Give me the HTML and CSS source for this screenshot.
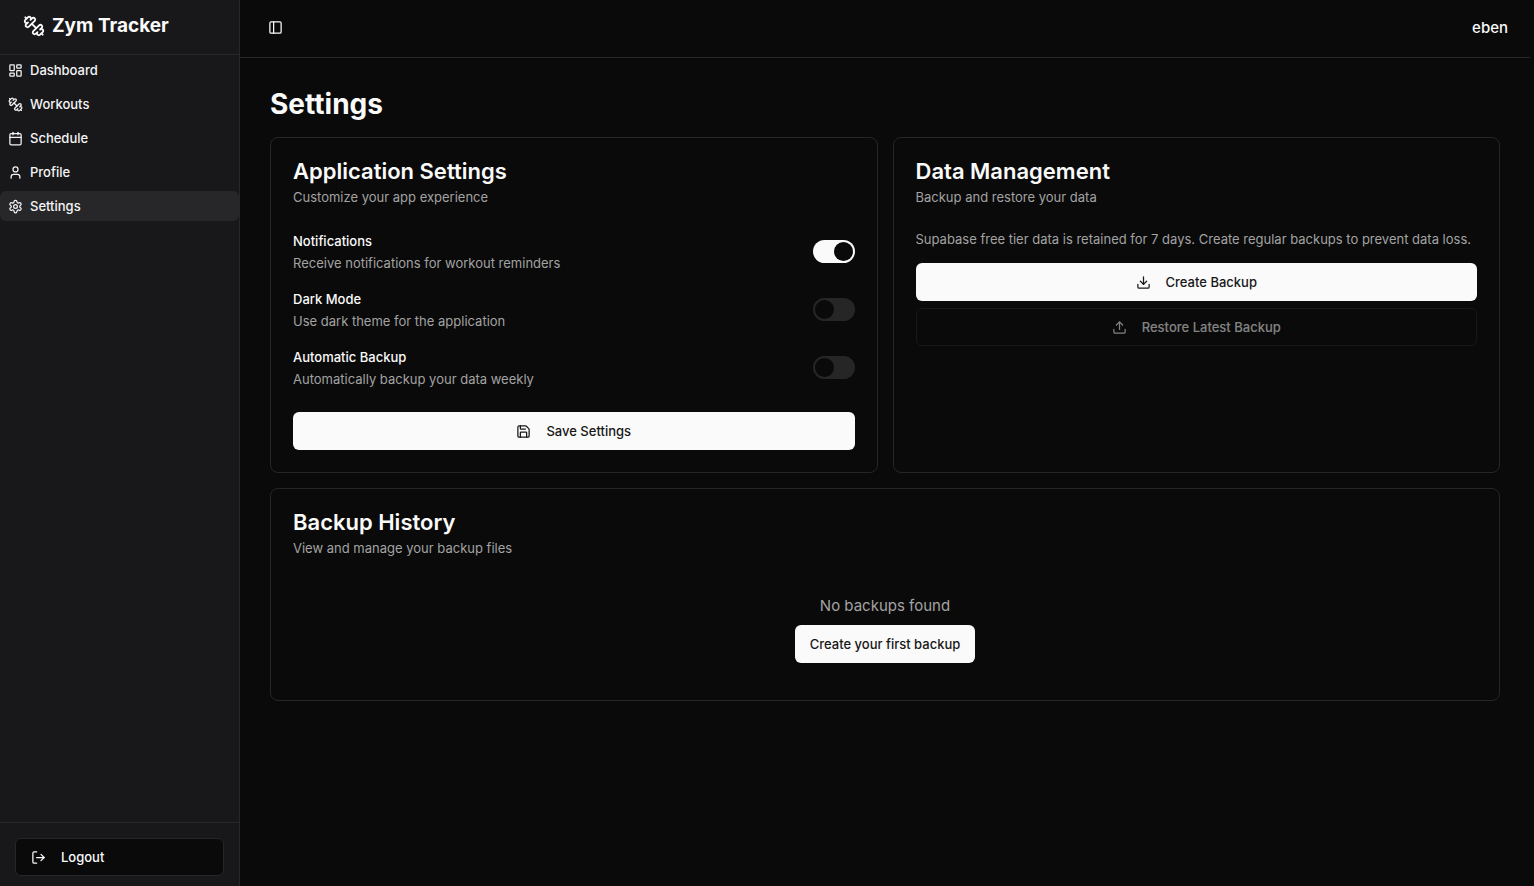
FILE: index.html
```html
<!DOCTYPE html>
<html lang="en">
<head>
<meta charset="utf-8">
<title>Zym Tracker</title>
<link rel="stylesheet" href="styles.css">
</head>
<body>
<svg class="sprite" aria-hidden="true">
  <symbol id="dumbbell" viewBox="0 0 24 24"><path d="M14.4 14.4 9.6 9.6"/><path d="M18.657 21.485a2 2 0 1 1-2.829-2.828l-1.767 1.768a2 2 0 1 1-2.829-2.829l6.364-6.364a2 2 0 1 1 2.829 2.829l-1.768 1.767a2 2 0 1 1 2.828 2.829z"/><path d="m21.5 21.5-1.4-1.4"/><path d="M3.9 3.9 2.5 2.5"/><path d="M6.404 12.768a2 2 0 1 1-2.829-2.829l1.768-1.767a2 2 0 1 1-2.828-2.829l2.828-2.828a2 2 0 1 1 2.829 2.828l1.767-1.768a2 2 0 1 1 2.829 2.829z"/></symbol>
</svg>
<div class="app">
  <aside class="sidebar">
    <div class="brand">
      <svg class="icon icon-lg"><use href="#dumbbell"/></svg>
      <span>Zym Tracker</span>
    </div>
    <nav class="nav">
      <a class="nav-link" href="#"><svg class="icon" viewBox="0 0 24 24"><rect width="7" height="9" x="3" y="3" rx="1"/><rect width="7" height="5" x="14" y="3" rx="1"/><rect width="7" height="9" x="14" y="12" rx="1"/><rect width="7" height="5" x="3" y="16" rx="1"/></svg>Dashboard</a>
      <a class="nav-link" href="#"><svg class="icon"><use href="#dumbbell"/></svg>Workouts</a>
      <a class="nav-link" href="#"><svg class="icon" viewBox="0 0 24 24"><path d="M8 2v4"/><path d="M16 2v4"/><rect width="18" height="18" x="3" y="4" rx="2"/><path d="M3 10h18"/></svg>Schedule</a>
      <a class="nav-link" href="#"><svg class="icon" viewBox="0 0 24 24"><path d="M19 21v-2a4 4 0 0 0-4-4H9a4 4 0 0 0-4 4v2"/><circle cx="12" cy="7" r="4"/></svg>Profile</a>
      <a class="nav-link active" href="#" aria-current="page"><svg class="icon" viewBox="0 0 24 24"><path d="M12.22 2h-.44a2 2 0 0 0-2 2v.18a2 2 0 0 1-1 1.73l-.43.25a2 2 0 0 1-2 0l-.15-.08a2 2 0 0 0-2.73.73l-.22.38a2 2 0 0 0 .73 2.73l.15.1a2 2 0 0 1 1 1.72v.51a2 2 0 0 1-1 1.74l-.15.09a2 2 0 0 0-.73 2.73l.22.38a2 2 0 0 0 2.73.73l.15-.08a2 2 0 0 1 2 0l.43.25a2 2 0 0 1 1 1.73V20a2 2 0 0 0 2 2h.44a2 2 0 0 0 2-2v-.18a2 2 0 0 1 1-1.73l.43-.25a2 2 0 0 1 2 0l.15.08a2 2 0 0 0 2.73-.73l.22-.39a2 2 0 0 0-.73-2.73l-.15-.08a2 2 0 0 1-1-1.74v-.5a2 2 0 0 1 1-1.74l.15-.09a2 2 0 0 0 .73-2.73l-.22-.38a2 2 0 0 0-2.73-.73l-.15.08a2 2 0 0 1-2 0l-.43-.25a2 2 0 0 1-1-1.73V4a2 2 0 0 0-2-2z"/><circle cx="12" cy="12" r="3"/></svg>Settings</a>
    </nav>
    <div class="sidebar-footer">
      <button class="btn btn-outline btn-start" type="button"><svg class="icon" viewBox="0 0 24 24"><path d="M9 21H5a2 2 0 0 1-2-2V5a2 2 0 0 1 2-2h4"/><path d="m16 17 5-5-5-5"/><path d="M21 12H9"/></svg>Logout</button>
    </div>
  </aside>

  <div class="page">
    <header class="topbar">
      <button class="toggle" type="button" aria-label="Toggle sidebar"><svg class="icon" viewBox="0 0 24 24"><rect width="18" height="18" x="3" y="3" rx="2"/><path d="M9 3v18"/></svg></button>
      <span class="user">eben</span>
    </header>

    <main class="content">
      <h1 class="page-title">Settings</h1>
      <div class="cards">
        <section class="card">
          <h2 class="card-title">Application Settings</h2>
          <p class="muted card-desc">Customize your app experience</p>
          <form class="settings">
            <div class="setting">
              <div>
                <label class="setting-label" for="notifications">Notifications</label>
                <p class="muted">Receive notifications for workout reminders</p>
              </div>
              <input class="switch" type="checkbox" role="switch" id="notifications" checked>
            </div>
            <div class="setting">
              <div>
                <label class="setting-label" for="dark-mode">Dark Mode</label>
                <p class="muted">Use dark theme for the application</p>
              </div>
              <input class="switch" type="checkbox" role="switch" id="dark-mode">
            </div>
            <div class="setting">
              <div>
                <label class="setting-label" for="auto-backup">Automatic Backup</label>
                <p class="muted">Automatically backup your data weekly</p>
              </div>
              <input class="switch" type="checkbox" role="switch" id="auto-backup">
            </div>
            <button class="btn btn-primary save" type="button"><svg class="icon" viewBox="0 0 24 24"><path d="M15.2 3a2 2 0 0 1 1.4.6l3.8 3.8a2 2 0 0 1 .6 1.4V19a2 2 0 0 1-2 2H5a2 2 0 0 1-2-2V5a2 2 0 0 1 2-2z"/><path d="M17 21v-7a1 1 0 0 0-1-1H8a1 1 0 0 0-1 1v7"/><path d="M7 3v4a1 1 0 0 0 1 1h7"/></svg>Save Settings</button>
          </form>
        </section>

        <section class="card">
          <h2 class="card-title">Data Management</h2>
          <p class="muted card-desc">Backup and restore your data</p>
          <p class="muted note">Supabase free tier data is retained for 7 days. Create regular backups to prevent data loss.</p>
          <div class="actions">
            <button class="btn btn-primary" type="button"><svg class="icon" viewBox="0 0 24 24"><path d="M21 15v4a2 2 0 0 1-2 2H5a2 2 0 0 1-2-2v-4"/><path d="m7 10 5 5 5-5"/><path d="M12 15V3"/></svg>Create Backup</button>
            <button class="btn btn-outline" type="button" disabled><svg class="icon" viewBox="0 0 24 24"><path d="M21 15v4a2 2 0 0 1-2 2H5a2 2 0 0 1-2-2v-4"/><path d="m17 8-5-5-5 5"/><path d="M12 3v12"/></svg>Restore Latest Backup</button>
          </div>
        </section>

        <section class="card card-wide">
          <h2 class="card-title">Backup History</h2>
          <p class="muted card-desc">View and manage your backup files</p>
          <div class="empty">
            <p class="empty-text">No backups found</p>
            <button class="btn btn-primary" type="button">Create your first backup</button>
          </div>
        </section>
      </div>
    </main>
  </div>
</div>
</body>
</html>
```
FILE: styles.css
```css
:root {
  --bg: #0a0a0a;
  --panel: #18181b;
  --accent: #27272a;
  --border: #262626;
  --fg: #fafafa;
  --muted: #a3a3a3;
}

* { box-sizing: border-box; margin: 0; padding: 0; }

body {
  background: var(--bg);
  color: var(--fg);
  font: 400 13px/20px Inter, sans-serif;
}

button, input { font: inherit; color: inherit; }

.sprite { display: none; }

.icon {
  width: 15px;
  height: 15px;
  flex: none;
  fill: none;
  stroke: currentColor;
  stroke-width: 2;
  stroke-linecap: round;
  stroke-linejoin: round;
}
.icon-lg { width: 22px; height: 22px; }

.app { display: flex; min-height: 100vh; }

.sidebar {
  width: 240px;
  flex: none;
  display: flex;
  flex-direction: column;
  background: var(--panel);
  border-right: 1px solid var(--accent);
}
.brand {
  display: flex;
  align-items: center;
  gap: 7px;
  padding: 12px 23px 14px;
  border-bottom: 1px solid var(--accent);
  font-size: 19px;
  line-height: 28px;
  font-weight: 700;
}
.nav { flex: 1; display: flex; flex-direction: column; gap: 4px; }
.nav-link {
  display: flex;
  align-items: center;
  gap: 7px;
  height: 30px;
  padding: 0 8px;
  border-radius: 6px;
  color: #f4f4f5;
  font-weight: 500;
  text-decoration: none;
}
.nav-link.active { background: var(--accent); }
.sidebar-footer {
  display: flex;
  padding: 15px 15px 10px;
  border-top: 1px solid var(--accent);
}

.page { flex: 1; min-width: 0; padding-right: 4px; }
.topbar {
  display: flex;
  align-items: center;
  justify-content: space-between;
  height: 58px;
  padding: 0 22px 2px;
  border-bottom: 1px solid var(--border);
}
.toggle {
  display: grid;
  place-items: center;
  width: 26px;
  height: 26px;
  border: 0;
  border-radius: 6px;
  background: none;
}
.user { font-size: 15px; font-weight: 500; }

.content { padding: 30px; }
.page-title {
  margin-bottom: 17px;
  font-size: 28px;
  line-height: 32px;
  font-weight: 700;
}
.cards { display: grid; grid-template-columns: 1fr 1fr; gap: 15px; }
.card {
  min-width: 0;
  padding: 22px;
  border: 1px solid var(--border);
  border-radius: 8px;
}
.card-wide { grid-column: 1 / -1; }
.card-title {
  margin-bottom: 5px;
  font-size: 22px;
  line-height: 22px;
  font-weight: 600;
}
.muted { color: var(--muted); }
.card-desc { margin-bottom: 23px; }

.settings { display: flex; flex-direction: column; gap: 15px; }
.setting { display: flex; align-items: center; justify-content: space-between; }
.setting-label { display: block; line-height: 23px; font-weight: 500; }
.save { margin-top: 8px; }

.switch {
  appearance: none;
  display: flex;
  width: 42px;
  height: 23px;
  padding: 2px;
  border-radius: 12px;
  background: var(--border);
}
.switch::before {
  content: "";
  width: 19px;
  height: 19px;
  border-radius: 50%;
  background: var(--bg);
}
.switch:checked { justify-content: flex-end; background: var(--fg); }

.btn {
  display: inline-flex;
  align-items: center;
  justify-content: center;
  gap: 15px;
  height: 38px;
  padding: 0 15px;
  border: 0;
  border-radius: 6px;
  font-weight: 500;
}
.btn-primary { background: var(--fg); color: #171717; }
.btn-outline { background: var(--bg); border: 1px solid var(--border); }
.btn-start { flex: 1; justify-content: flex-start; }
.btn:disabled { opacity: 0.5; }

.note { margin-bottom: 15px; line-height: 18px; }
.actions { display: flex; flex-direction: column; gap: 7px; }

.empty {
  display: flex;
  flex-direction: column;
  align-items: center;
  gap: 9px;
  padding: 15px 0;
}
.empty-text { color: var(--muted); font-size: 15px; }
```
